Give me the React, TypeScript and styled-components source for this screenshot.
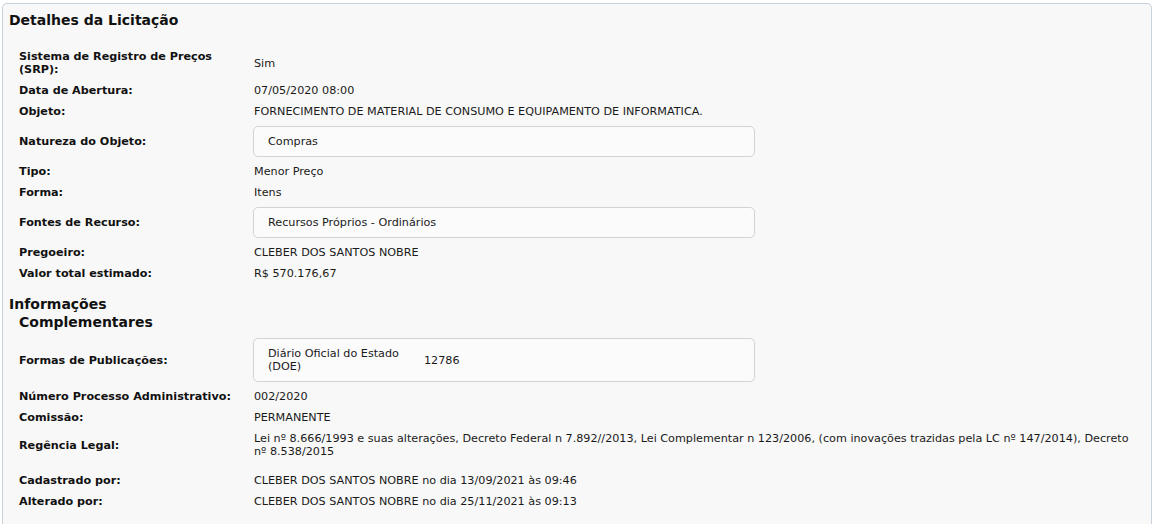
import React from "react";
import styled, { createGlobalStyle } from "styled-components";

const Global = createGlobalStyle`
  html, body { margin: 0; padding: 0; background: #ffffff; }
  body { font-family: Verdana, "DejaVu Sans", sans-serif; color: #1a1a1a; }
`;

const Card = styled.section`
  margin: 3px 1px 0 2px;
  border: 1px solid #c8d2dc;
  border-bottom: none;
  border-radius: 5px 5px 0 0;
  background: #f8f8f8;
  padding: 6px 0 20px 6px;
  min-height: 530px;
  box-sizing: border-box;
`;

const Title = styled.h2`
  margin: 0;
  font-size: 14px;
  line-height: 20px;
  font-weight: bold;
  color: #111;
`;

const SubTitle = styled.h2`
  margin: 11px 0 3px;
  font-size: 14px;
  line-height: 18px;
  font-weight: bold;
  color: #111;
  width: 160px;
`;

const Indent = styled.span`
  display: block;
  padding-left: 10px;
`;

const List = styled.div<{ $top?: number }>`
  display: flex;
  flex-direction: column;
  margin-top: ${(p) => p.$top ?? 0}px;
`;

const Row = styled.div<{ $extra?: number }>`
  display: grid;
  grid-template-columns: 235px 1fr;
  align-items: center;
  padding: 4px 20px ${(p) => 4 + (p.$extra ?? 0)}px 10px;
  font-size: 11.2px;
  line-height: 13px;
`;

const Label = styled.div`
  font-weight: bold;
  color: #111;
  padding-right: 16px;
`;

const Value = styled.div`
  color: #1a1a1a;
`;

const Box = styled.div`
  margin-left: -1px;
  width: 502px;
  box-sizing: border-box;
  border: 1px solid #d3d3d3;
  border-radius: 5px;
  background: #fbfbfc;
  padding: 8px 14px;
  display: flex;
  align-items: center;
`;

const PubName = styled.span`
  width: 140px;
  margin-right: 16px;
`;

type Item = { label: string; value?: React.ReactNode; box?: React.ReactNode; extra?: number };

const first: Item[] = [
  { label: "Sistema de Registro de Preços (SRP):", value: "Sim" },
  { label: "Data de Abertura:", value: "07/05/2020 08:00" },
  { label: "Objeto:", value: "FORNECIMENTO DE MATERIAL DE CONSUMO E EQUIPAMENTO DE INFORMATICA." },
  { label: "Natureza do Objeto:", box: "Compras" },
  { label: "Tipo:", value: "Menor Preço" },
  { label: "Forma:", value: "Itens" },
  { label: "Fontes de Recurso:", box: "Recursos Próprios - Ordinários" },
  { label: "Pregoeiro:", value: "CLEBER DOS SANTOS NOBRE" },
  { label: "Valor total estimado:", value: "R$ 570.176,67" },
];

const second: Item[] = [
  {
    label: "Formas de Publicações:",
    box: (
      <>
        <PubName>Diário Oficial do Estado (DOE)</PubName>
        <span>12786</span>
      </>
    ),
  },
  { label: "Número Processo Administrativo:", value: "002/2020" },
  { label: "Comissão:", value: "PERMANENTE" },
  {
    label: "Regência Legal:",
    value:
      "Lei nº 8.666/1993 e suas alterações, Decreto Federal n 7.892//2013, Lei Complementar n 123/2006, (com inovações trazidas pela LC nº 147/2014), Decreto nº 8.538/2015",
    extra: 8,
  },
  { label: "Cadastrado por:", value: "CLEBER DOS SANTOS NOBRE no dia 13/09/2021 às 09:46" },
  { label: "Alterado por:", value: "CLEBER DOS SANTOS NOBRE no dia 25/11/2021 às 09:13" },
];

const renderRows = (items: Item[]) =>
  items.map((it) => (
    <Row key={it.label} $extra={it.extra}>
      <Label>{it.label}</Label>
      {it.box ? <Box>{it.box}</Box> : <Value>{it.value}</Value>}
    </Row>
  ));

export default function App() {
  return (
    <>
      <Global />
      <Card>
        <Title>Detalhes da Licitação</Title>
        <List $top={16}>{renderRows(first)}</List>
        <SubTitle>
          Informações
          <Indent>Complementares</Indent>
        </SubTitle>
        <List>{renderRows(second)}</List>
      </Card>
    </>
  );
}
